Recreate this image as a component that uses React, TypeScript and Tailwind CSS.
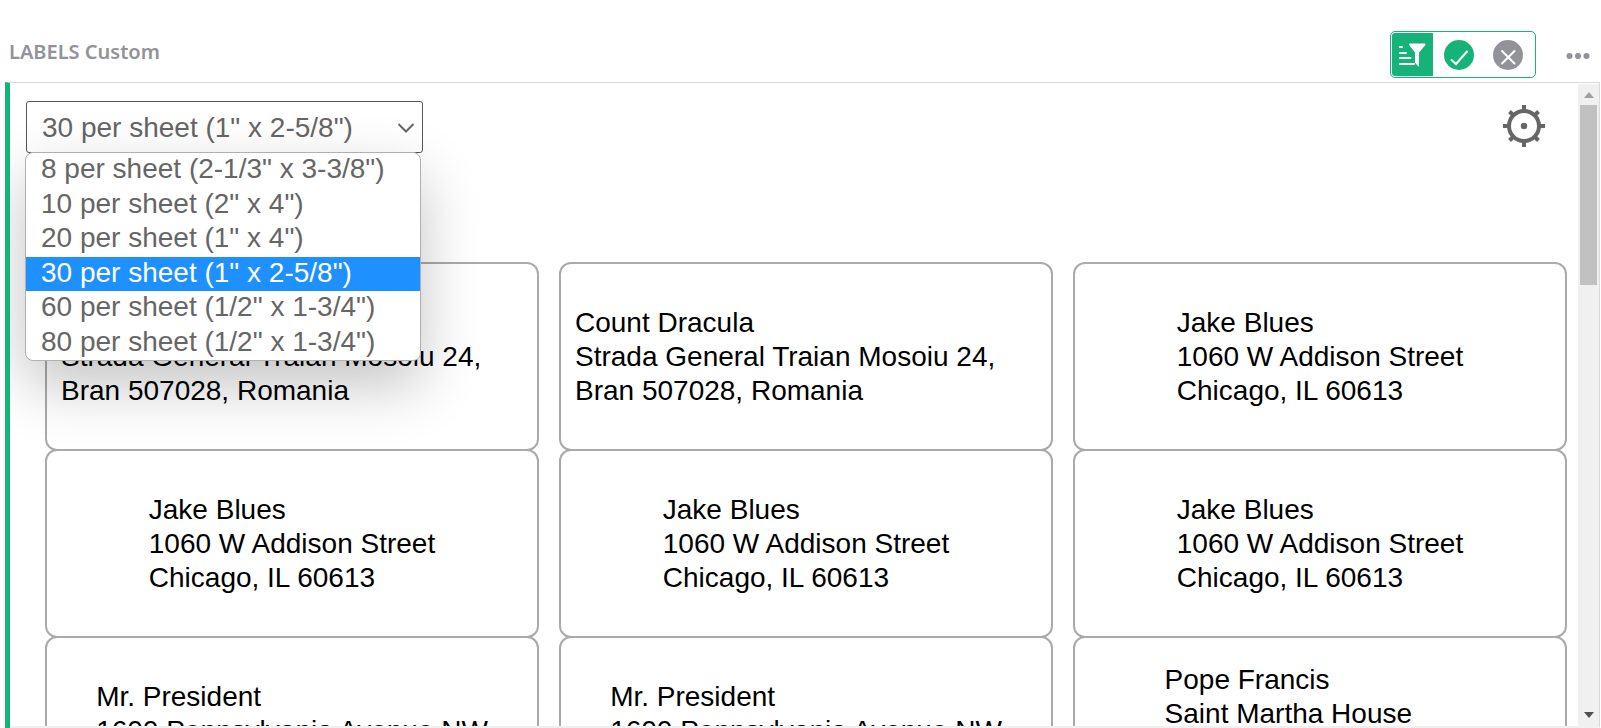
import { useState } from "react";

const sizes = [
  '8 per sheet (2-1/3" x 3-3/8")',
  '10 per sheet (2" x 4")',
  '20 per sheet (1" x 4")',
  '30 per sheet (1" x 2-5/8")',
  '60 per sheet (1/2" x 1-3/4")',
  '80 per sheet (1/2" x 1-3/4")',
];

const dracula = "Count Dracula\nStrada General Traian Mosoiu 24, Bran 507028, Romania";
const jake = "Jake Blues\n1060 W Addison Street\nChicago, IL 60613";
const president = "Mr. President\n1600 Pennsylvania Avenue NW\nWashington, DC 20500";
const pope = "Pope Francis\nSaint Martha House\n00120 Citta del Vaticano,\nVatican City";

const labels = [dracula, dracula, jake, jake, jake, jake, president, president, pope];

function SortFilterIcon() {
  return (
    <svg width="27" height="24" viewBox="0 0 27 24" fill="none" aria-hidden="true">
      <path d="M1 4h2M1 10h6M1 15h10.500M1 21h14" stroke="#fff" strokeWidth="2" strokeLinecap="round" />
      <path d="M10.500 .5h15.500q1 1 0 2L20 9.500V23q-.5.800-1.200 0L16 19.500V9.500L10.500 2.500q-1-1 0-2z" fill="#fff" />
    </svg>
  );
}

function GearIcon() {
  return (
    <svg width="42" height="42" viewBox="0 0 42 42" fill="none" stroke="#666" aria-hidden="true">
      <circle cx="21" cy="21" r="15" strokeWidth="4" />
      <circle cx="21" cy="21" r="3.200" fill="#666" stroke="none" />
      <path
        d="M21 0v5M21 37v5M0 21h5M37 21h5M6.500 6.500l4 4M31.500 31.500l4 4M35.500 6.500l-4 4M10.500 31.500l-4 4"
        strokeWidth="4"
      />
    </svg>
  );
}

export default function App() {
  const [selected, setSelected] = useState(3);

  return (
    <div className="flex h-screen flex-col overflow-hidden bg-white font-['Liberation_Sans',Arial,sans-serif]">
      <header className="flex items-start justify-between pt-[31px] pb-1 pl-[9px] pr-[11px]">
        <h1 className="font-['Noto_Sans','Open_Sans',sans-serif] text-[20px] leading-[42px] font-semibold text-[#929299]">
          LABELS Custom
        </h1>
        <div className="flex items-center gap-[30px]">
          <div className="flex h-[47px] w-[146px] items-center rounded-[5px] border border-[#16b378] p-px">
            <button type="button" aria-label="Sort and filter" className="flex h-full w-[41px] items-center justify-center rounded-l-[3px] bg-[#16b378]">
              <SortFilterIcon />
            </button>
            <div className="flex flex-1 items-center justify-center gap-[19px]">
              <button type="button" aria-label="Save" className="flex size-[30px] items-center justify-center rounded-full bg-[#16b378]">
                <svg width="30" height="30" viewBox="0 0 30 30" fill="none" aria-hidden="true">
                  <path d="M7.500 20l4.500 4L23 11.500" stroke="#fff" strokeWidth="2" strokeLinecap="round" />
                </svg>
              </button>
              <button type="button" aria-label="Revert" className="flex size-[30px] items-center justify-center rounded-full bg-[#929299]">
                <svg width="30" height="30" viewBox="0 0 30 30" fill="none" aria-hidden="true">
                  <path d="M9 11l12.500 12.500M21.500 11L9 23.500" stroke="#fff" strokeWidth="2" strokeLinecap="round" />
                </svg>
              </button>
            </div>
          </div>
          <button type="button" aria-label="More options">
            <svg width="24" height="8" viewBox="0 0 24 8" fill="#929299" aria-hidden="true">
              <circle cx="3.500" cy="5" r="3" />
              <circle cx="12" cy="5" r="3" />
              <circle cx="20.500" cy="5" r="3" />
            </svg>
          </button>
        </div>
      </header>

      <main className="mr-px ml-[5px] flex min-h-0 flex-1 border-t border-l-5 border-t-[#d9d9d9] border-l-[#16b378]">
        <div className="flex min-w-0 flex-1 border-r border-b-2 border-r-[#d9d9d9] border-b-[#f0f0f0]">
          <div className="min-w-0 flex-1 overflow-hidden pt-[18px]">
            <div className="flex items-start justify-between pl-4 pr-[33px]">
              <div className="relative w-[397px]">
                <select
                  aria-label="Label size"
                  value={selected}
                  onChange={(e) => setSelected(Number(e.target.value))}
                  className="block h-[52px] w-full appearance-none rounded-[3px] border border-[#555] bg-white px-[15px] pt-[2px] text-[28px] text-[#666]"
                >
                  {sizes.map((size, i) => (
                    <option key={i} value={i}>
                      {size}
                    </option>
                  ))}
                </select>
                <svg className="pointer-events-none absolute top-[21px] right-[8px]" width="18" height="12" viewBox="0 0 18 12" fill="none" aria-hidden="true">
                  <path d="M1.500 2L9 9.500 16.500 2" stroke="#666" strokeWidth="2" />
                </svg>
                <ul
                  role="listbox"
                  aria-label="Label sizes"
                  className="absolute top-full -left-px z-10 -mt-px grid h-[209px] w-[396px] auto-rows-fr overflow-hidden rounded-[8px] border border-[#b0b0b0] bg-white text-[28px] leading-[32px] text-[#666] shadow-[0_24px_60px_rgba(0,0,0,0.24)]"
                >
                  {sizes.map((size, i) => (
                    <li
                      key={i}
                      role="option"
                      aria-selected={i === selected}
                      onClick={() => setSelected(i)}
                      className="px-[15px] whitespace-nowrap aria-selected:bg-[#1e90ff] aria-selected:text-white"
                    >
                      {size}
                    </li>
                  ))}
                </ul>
              </div>
              <button type="button" aria-label="Settings" className="mt-1">
                <GearIcon />
              </button>
            </div>

            <div className="mt-[109px] grid grid-cols-3 gap-x-5 pr-[11px] pl-[35px]">
              {labels.map((label, i) => (
                <div key={i} className="-mb-[2px] flex h-[189px] items-center justify-center rounded-[12px] border-2 border-[#aaa] px-[14px]">
                  <p className="text-[28px] leading-[34px] whitespace-pre-line text-black">{label}</p>
                </div>
              ))}
            </div>
          </div>

          <div className="mt-px flex w-[21px] flex-col items-center bg-[#f0f0f0] py-2" aria-hidden="true">
            <svg width="10" height="6" viewBox="0 0 10 6" fill="#a0a0a0">
              <path d="M5 0l5 6H0z" />
            </svg>
            <div className="mt-[7px] h-[180px] w-[17px] bg-[#c1c1c1]" />
            <svg className="mt-auto" width="10" height="6" viewBox="0 0 10 6" fill="#505050">
              <path d="M0 0h10L5 6z" />
            </svg>
          </div>
        </div>
      </main>
    </div>
  );
}
